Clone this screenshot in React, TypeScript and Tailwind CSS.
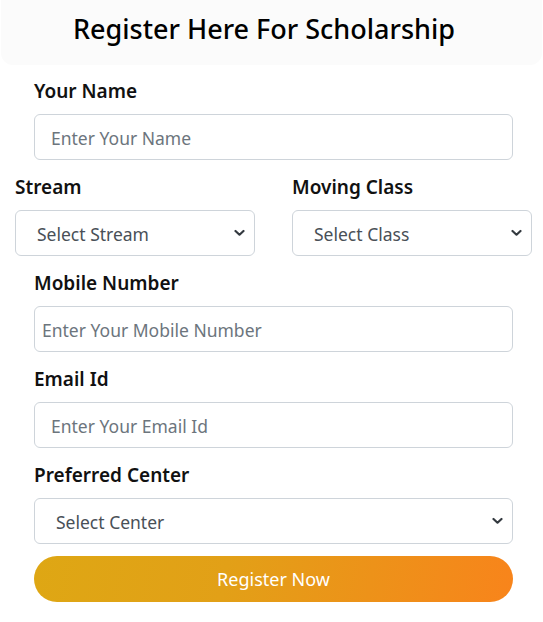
import React from "react";

const font = { fontFamily: '"Noto Sans", "Open Sans", sans-serif' };

function Chevron() {
  return (
    <svg width="11" height="7" viewBox="0 0 11 7" className="absolute right-[9px] top-1/2 -translate-y-1/2 pointer-events-none">
      <path d="M1.5 1.5 L5.5 5.2 L9.5 1.5" fill="none" stroke="#343a40" strokeWidth="2.2" strokeLinecap="round" strokeLinejoin="round" />
    </svg>
  );
}

function Label({ children, className = "" }: { children: React.ReactNode; className?: string }) {
  return <div className={"text-[19px] leading-[24px] font-semibold text-[#111] mb-[11px] " + className}>{children}</div>;
}

function Input({ placeholder, pl = "pl-[16px]" }: { placeholder: string; pl?: string }) {
  return (
    <input
      placeholder={placeholder}
      className={"block w-full h-[46px] border border-[#ced4da] rounded-[6px] pt-[2px] text-[17.5px] text-[#495057] placeholder:text-[#6c757d] outline-none bg-white " + pl}
      style={font}
    />
  );
}

function Select({ text }: { text: string }) {
  return (
    <div className="relative w-full h-[46px] border border-[#ced4da] rounded-[6px] bg-white flex items-center pt-[2px] pl-[21px] text-[17.5px] text-[#495057]">
      <span>{text}</span>
      <Chevron />
    </div>
  );
}

export default function App() {
  return (
    <div className="w-[543px] h-[622px] bg-white" style={font}>
      <div className="h-[65px] mx-[1px] bg-[#fbfbfb] rounded-b-[12px] flex items-center justify-center pr-[15px]">
        <h1 className="text-[27px] font-medium text-black leading-none -mt-[9px]">Register Here For Scholarship</h1>
      </div>
      <div className="ml-[34px] w-[479px] mt-[14px]">
        <Label>Your Name</Label>
        <Input placeholder="Enter Your Name" />
        <div className="-mx-[19px] flex gap-[37px] mt-[15px]">
          <div className="w-[240px]">
            <Label>Stream</Label>
            <Select text="Select Stream" />
          </div>
          <div className="w-[240px]">
            <Label>Moving Class</Label>
            <Select text="Select Class" />
          </div>
        </div>
        <Label className="mt-[15px]">Mobile Number</Label>
        <Input placeholder="Enter Your Mobile Number" pl="pl-[7px]" />
        <Label className="mt-[15px]">Email Id</Label>
        <Input placeholder="Enter Your Email Id" />
        <Label className="mt-[15px]">Preferred Center</Label>
        <Select text="Select Center" />
        <button
          className="mt-[12px] w-full h-[46px] rounded-full text-white text-[18px] bg-[linear-gradient(100deg,#dea714_0%,#e2a017_40%,#f8841b_100%)]"
          style={font}
        >
          Register Now
        </button>
      </div>
    </div>
  );
}
